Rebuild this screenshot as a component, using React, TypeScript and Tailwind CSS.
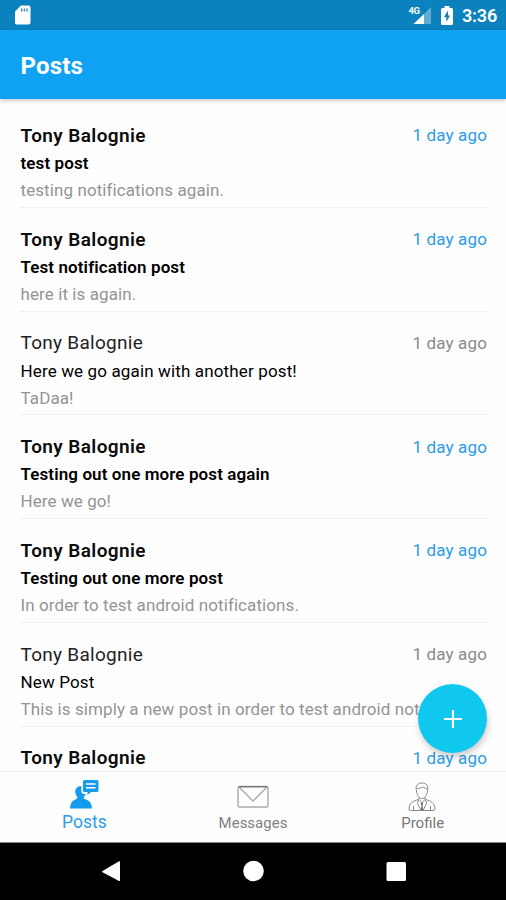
import React from "react";

type Post = { title: string; body: string; unread: boolean };

const posts: Post[] = [
  { title: "test post", body: "testing notifications again.", unread: true },
  { title: "Test notification post", body: "here it is again.", unread: true },
  { title: "Here we go again with another post!", body: "TaDaa!", unread: false },
  { title: "Testing out one more post again", body: "Here we go!", unread: true },
  { title: "Testing out one more post", body: "In order to test android notifications.", unread: true },
  { title: "New Post", body: "This is simply a new post in order to test android notific", unread: false },
  { title: "", body: "", unread: true },
];

function StatusBar() {
  return (
    <div className="flex h-[30px] shrink-0 items-center bg-[#0b82be] pr-[9px] pl-[15px] text-white">
      <svg width="16" height="20" viewBox="0 0 16 20" fill="currentColor">
        <path d="M6 .5h7.6A1.9 1.9 0 0 1 15.500 2.400v15.200a1.900 1.900 0 0 1-1.900 1.900H1.900A1.900 1.900 0 0 1 0 17.600V6.400z" />
        <path d="M6 3.500h1.500v3H6zM8.700 3.500h1.400v3H8.700zM11.300 3.500h1.500v3h-1.500z" fill="#3a91c2" />
      </svg>
      <div className="ml-auto flex items-center">
        <svg width="24" height="20" viewBox="0 0 24 20" className="mr-[9px]" fill="currentColor">
          <path d="M23 2v17h-7V9z" opacity=".35" />
          <path d="M16 9v10H5.500z" />
          <text x="0.500" y="9" fontSize="9.500" fontWeight="700" letterSpacing="-.4" fontFamily="Roboto, sans-serif">4G</text>
        </svg>
        <svg width="12" height="19" viewBox="0 0 12 19" className="mr-[9px]" fill="currentColor">
          <path d="M3.500 0h5v2H10.500A1.500 1.500 0 0 1 12 3.500v14a1.500 1.500 0 0 1-1.500 1.500h-9A1.500 1.500 0 0 1 0 17.500v-14A1.500 1.500 0 0 1 1.500 2h2z" />
          <path d="M7 4.500 3 11h2.300v5L9 9.500H7z" fill="#0b82be" />
        </svg>
        <span className="pt-px text-[18px] leading-[30px] font-semibold tracking-[-0.2px]">3:36</span>
      </div>
    </div>
  );
}

function PostRow({ title, body, unread }: Post) {
  return (
    <li className="flex h-[103.75px] shrink-0 flex-col border-b border-[#f0f0f0] pt-5">
      <div className="flex h-6 items-center justify-between pr-px pl-[0.5px]">
        <span className={unread ? "text-[19px] font-semibold tracking-[0.4px] text-[#0c0c0c]" : "text-[19px] tracking-[0.28px] text-[#222]"}>
          Tony Balognie
        </span>
        <span className={unread ? "text-[17px] tracking-[0.15px] text-[#2b9ce6]" : "text-[17px] tracking-[0.15px] text-[#8a8a8a]"}>
          1 day ago
        </span>
      </div>
      {title && (
        <div className={unread ? "mt-[3px] h-6 pl-[0.5px] text-[17px] leading-6 font-semibold tracking-[0.1px] text-black" : "mt-[3px] h-6 pl-[0.5px] text-[17px] leading-6 tracking-[0.14px] text-black"}>
          {title}
        </div>
      )}
      {body && <div className="mt-[3px] h-6 pl-[0.5px] text-[17px] leading-6 tracking-[0.09px] whitespace-nowrap text-[#949494]">{body}</div>}
    </li>
  );
}

function PostsIcon() {
  return (
    <svg width="30" height="30" viewBox="0 0 30 30" fill="#159bec">
      <path d="M15.500 1h12.500a1.500 1.500 0 0 1 1.500 1.500v9a1.500 1.500 0 0 1-1.500 1.500H22l-3.500 3v-3h-3A1.500 1.500 0 0 1 14 11.500v-9A1.500 1.500 0 0 1 15.500 1z" />
      <path d="M17 5h9.500M17 8.800h9.500" stroke="white" strokeWidth="1.500" />
      <path d="M12.300 7C8 7 5.800 10 6.300 13.500c.4 2.500 1.500 3.800 2.200 4.700L7.500 20C3.500 21.500 1.500 23 1 29.500h22c-.5-6.500-3-8-7.500-9.500l-1-1.800c1-1 1.900-2 2.200-3.200h-1.400c-2 0-3-1-3-3z" />
    </svg>
  );
}

function MailIcon() {
  return (
    <svg width="32" height="24" viewBox="0 0 32 24" fill="none" stroke="#aaa" strokeWidth="1.400">
      <rect x="1" y="1.500" width="30" height="20.500" rx="1.500" />
      <path d="m2 2 14 14L30 2" />
      <path d="M2 1.700h28" stroke="#777" />
    </svg>
  );
}

function ProfileIcon() {
  return (
    <svg width="28" height="30" viewBox="0 0 28 30" fill="none" stroke="#8a8a8a" strokeWidth="1">
      <path d="M8.500 9C7 3.500 10 1 14 1s7 2.500 5.500 8c-.5 5-3 7.500-5.500 7.500S9 14 8.500 9z" />
      <path d="M9 6.500c2 0 4.500-.5 6-1.800 1 1.300 2.500 1.800 4.500 1.800" />
      <path d="M11 15v2.500l3 3 3-3V15M10.500 17.500C5 19 1.500 20.500 1 27q0 1.500 1.500 1.500h23Q27 28.500 27 27c-.5-6.500-4-8-9.500-9.500" />
      <path d="m10.500 17.500-1 4 3.500 7m4.500-11 1 4-3.500 7M5.500 24v4.500m17-4.500v4.500" />
      <path d="m14 20-1.300 1.500.8 1.500-.5 5h2l-.5-5 .8-1.500z" fill="#666" stroke="none" />
    </svg>
  );
}

export default function App() {
  return (
    <div className="relative flex h-[900px] w-[506px] flex-col overflow-hidden bg-[#fefefe] font-['Roboto','Noto_Sans',sans-serif]">
      <StatusBar />
      <header className="z-10 flex h-[69px] shrink-0 items-center bg-[#0fa2f3] pt-[3px] pl-[20.5px] shadow-[0_2px_4px_rgba(0,0,0,0.2)]">
        <h1 className="text-[24px] font-bold tracking-[0.2px] text-white">Posts</h1>
      </header>
      <ul className="flex min-h-0 flex-1 flex-col overflow-hidden pt-[5px] pr-[18px] pl-5">
        {posts.map((post, i) => (
          <PostRow key={i} {...post} />
        ))}
      </ul>
      <button aria-label="New post" className="absolute top-[684px] left-[418px] flex size-[69px] items-center justify-center rounded-full bg-[#10c8ee] shadow-[1px_4px_6px_rgba(0,0,0,0.2)]">
        <svg width="18" height="18" viewBox="0 0 18 18" stroke="white" strokeWidth="2.200">
          <path d="M9 0v18M0 9h18" />
        </svg>
      </button>
      <nav className="grid h-[71px] shrink-0 grid-cols-3 border-t border-[#eee] bg-[#fefefe]">
        <div className="flex flex-col items-center pt-[7px]">
          <PostsIcon />
          <span className="mt-px text-[17.5px] leading-6 text-[#2b9ce6]">Posts</span>
        </div>
        <div className="flex flex-col items-center pt-[13px]">
          <MailIcon />
          <span className="mt-[2px] text-[15px] leading-6 text-[#808080]">Messages</span>
        </div>
        <div className="flex flex-col items-center pt-[10px]">
          <ProfileIcon />
          <span className="-mt-px pl-[2px] text-[15px] leading-6 text-[#777]">Profile</span>
        </div>
      </nav>
      <div className="h-[58px] shrink-0 border-t border-[#888] bg-black">
        <svg width="506" height="57" viewBox="0 0 506 57" fill="white">
          <path d="M102.500 28 119 18.300q1-.5 1 .6v18.500q0 1.100-1 .5L102.500 29.200q-1-.6 0-1.200z" />
          <circle cx="253.500" cy="28" r="10.300" />
          <rect x="386.500" y="19" width="19.500" height="19" rx="1.500" />
        </svg>
      </div>
    </div>
  );
}
